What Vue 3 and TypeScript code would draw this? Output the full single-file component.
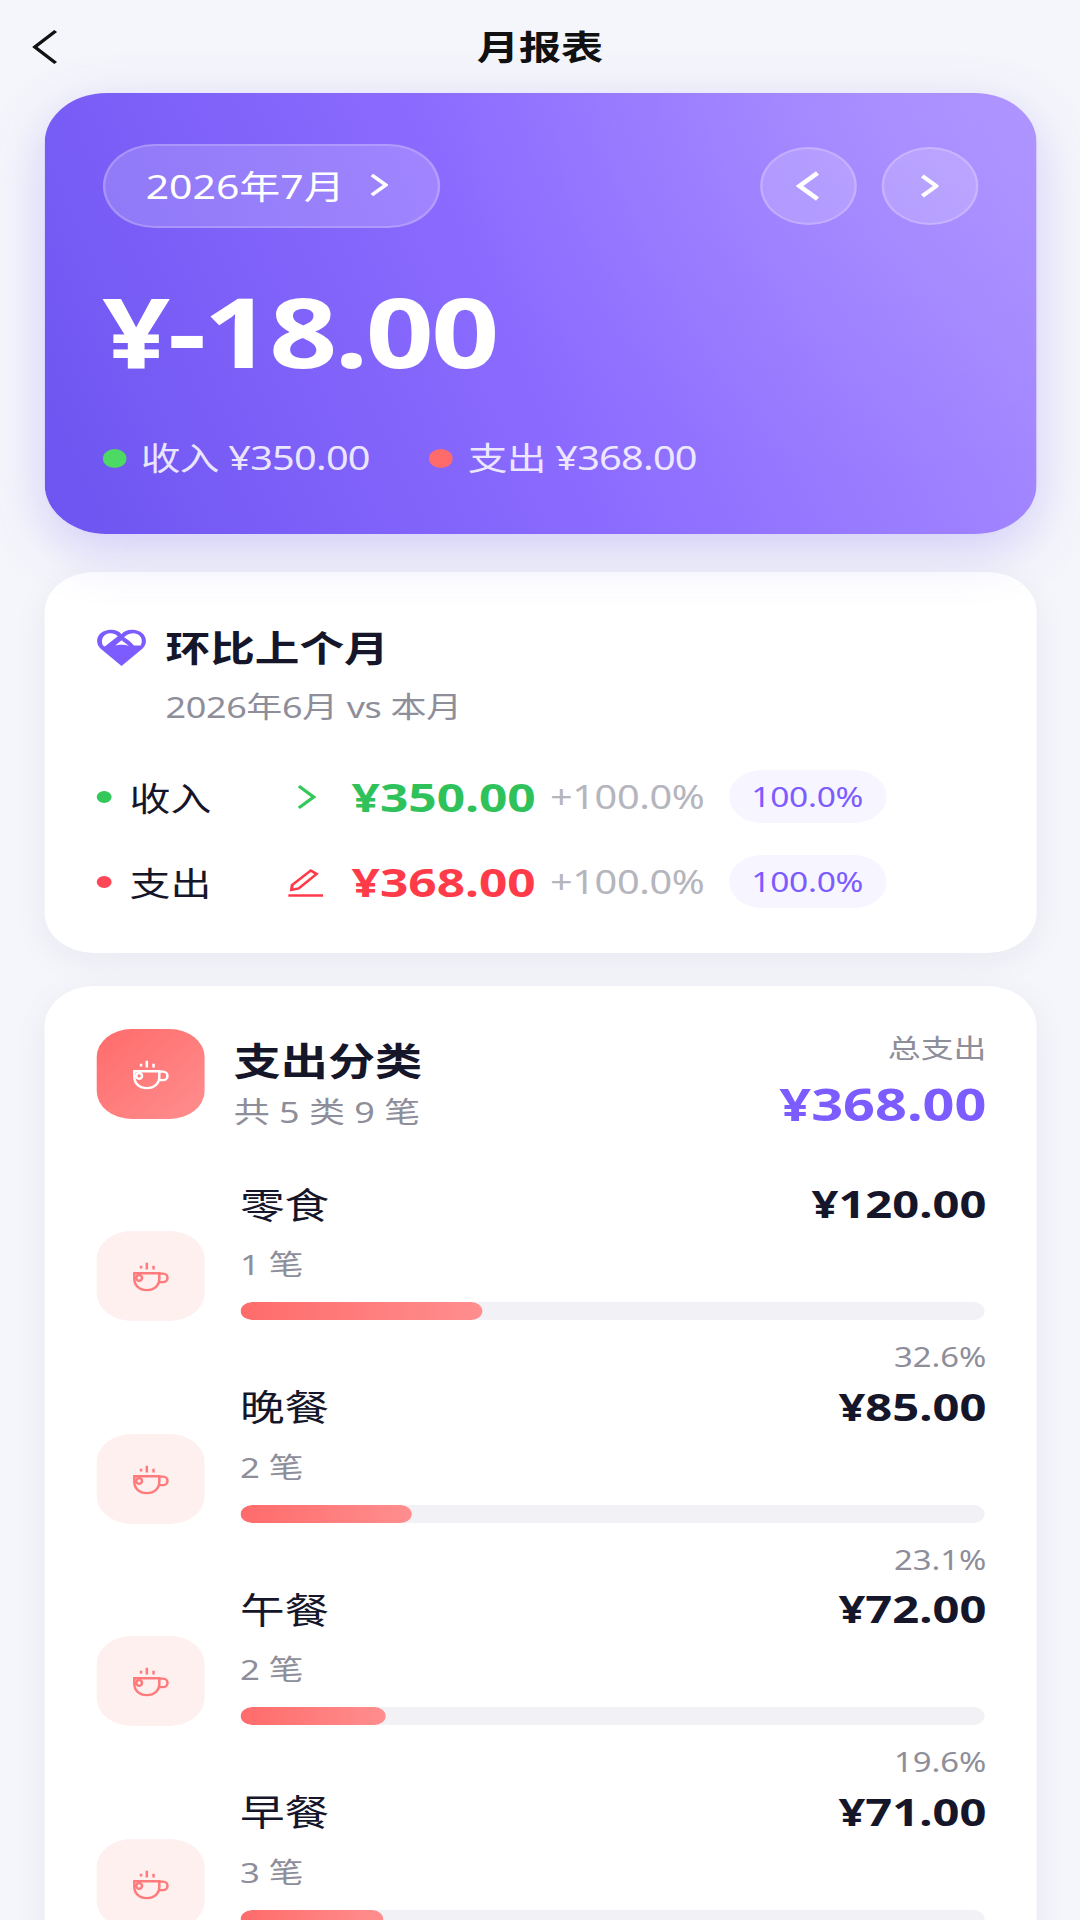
<script setup lang="ts">
interface CompareRow {
  label: string
  amount: string
  kind: 'income' | 'expense'
}

interface Category {
  name: string
  count: number
  amount: string
  percent: number
}

const compareRows: CompareRow[] = [
  { label: '收入', amount: '¥350.00', kind: 'income' },
  { label: '支出', amount: '¥368.00', kind: 'expense' }
]

const categories: Category[] = [
  { name: '零食', count: 1, amount: '¥120.00', percent: 32.6 },
  { name: '晚餐', count: 2, amount: '¥85.00', percent: 23.1 },
  { name: '午餐', count: 2, amount: '¥72.00', percent: 19.6 },
  { name: '早餐', count: 3, amount: '¥71.00', percent: 19.3 }
]
</script>

<template>
  <div class="page">
    <header class="top-bar">
      <svg class="back" viewBox="0 0 20 36" fill="none" preserveAspectRatio="none">
        <path d="M18 2 2 18l16 16" />
      </svg>
      <h1 class="top-title">月报表</h1>
    </header>

    <section class="hero">
      <div class="hero-top">
        <div class="month-pill">
          <span>2026年7月</span>
          <svg class="pill-arrow" viewBox="0 0 16 24" fill="none" preserveAspectRatio="none"><path d="M2 2l12 10L2 22" /></svg>
        </div>
        <div class="nav">
          <div class="nav-btn">
            <svg class="nav-prev" viewBox="0 0 22 32" fill="none" preserveAspectRatio="none"><path d="M19 3 3 16l16 13" /></svg>
          </div>
          <div class="nav-btn">
            <svg class="nav-next" viewBox="0 0 16 24" fill="none" preserveAspectRatio="none"><path d="M2 2l12 10L2 22" /></svg>
          </div>
        </div>
      </div>
      <div class="hero-amount">¥-18.00</div>
      <div class="hero-stats">
        <div class="stat"><i class="stat-dot green"></i>收入 ¥350.00</div>
        <div class="stat"><i class="stat-dot red"></i>支出 ¥368.00</div>
      </div>
    </section>

    <section class="card compare">
      <div class="compare-head">
        <svg class="heart" viewBox="0 0 40 38" preserveAspectRatio="none">
          <path class="heart-body" d="M20 37 3 20C-2 14 0 4 9 2c5-1 9 1 11 4 2-3 6-5 11-4 9 2 11 12 6 18z" />
          <path class="heart-cut" d="M5 17C2.500 11 6 5 11 5c2.500 0 4.500 1 6 3L6.500 18z" />
          <path class="heart-cut" d="M22 9c2-3 5-4 8-4 5 .5 8 6 5.500 12H30c-2-3-5-6-8-8z" />
          <path class="heart-cut" d="M15 17l5-5 6 5.500c-3-1.500-8-1.500-11-.5z" />
        </svg>
        <div>
          <div class="compare-title">环比上个月</div>
          <div class="compare-sub">2026年6月 vs 本月</div>
        </div>
      </div>
      <div v-for="row in compareRows" :key="row.label" class="compare-row" :class="row.kind">
        <i class="row-dot"></i>
        <span class="row-label">{{ row.label }}</span>
        <span class="row-icon">
          <svg v-if="row.kind === 'income'" class="row-arrow" viewBox="0 0 16 24" fill="none" preserveAspectRatio="none">
            <path d="M2 2l12 10L2 22" />
          </svg>
          <svg v-else class="row-pen" viewBox="0 0 28 30" fill="none" preserveAspectRatio="none">
            <path d="M3.500 18 18 3.500l4.500 3.500L8.500 21.500 3 23z" />
            <path d="M.5 28.500h27" />
          </svg>
        </span>
        <span class="row-amount">{{ row.amount }}</span>
        <span class="row-change">+100.0%</span>
        <span class="row-tag">100.0%</span>
      </div>
    </section>

    <section class="card breakdown">
      <div class="breakdown-head">
        <div class="cat-icon solid">
          <svg class="cup" viewBox="0 0 40 34" fill="none" preserveAspectRatio="none">
            <path d="M3 14h26v6c0 7-5 12-13 12S3 27 3 20z" />
            <path d="M29 14.500h4a4.500 4.500 0 0 1 0 9h-5" />
            <circle cx="8" cy="19" r="3" />
            <path d="M10 9V6M16 10V3M23 10V6" />
          </svg>
        </div>
        <div class="head-text">
          <div class="head-title">支出分类</div>
          <div class="head-sub">共 5 类 9 笔</div>
        </div>
        <div class="head-total">
          <div class="total-label">总支出</div>
          <div class="total-value">¥368.00</div>
        </div>
      </div>

      <div v-for="cat in categories" :key="cat.name" class="cat-item">
        <div class="cat-icon">
          <svg class="cup" viewBox="0 0 40 34" fill="none" preserveAspectRatio="none">
            <path d="M3 14h26v6c0 7-5 12-13 12S3 27 3 20z" />
            <path d="M29 14.500h4a4.500 4.500 0 0 1 0 9h-5" />
            <circle cx="8" cy="19" r="3" />
            <path d="M10 9V6M16 10V3M23 10V6" />
          </svg>
        </div>
        <div class="cat-body">
          <div class="cat-line">
            <span class="cat-name">{{ cat.name }}</span>
            <span class="cat-amount">{{ cat.amount }}</span>
          </div>
          <div class="cat-count">{{ cat.count }} 笔</div>
          <div class="bar">
            <div class="bar-fill" :style="{ width: cat.percent + '%' }"></div>
          </div>
          <div class="cat-percent">{{ cat.percent }}%</div>
        </div>
      </div>
    </section>
  </div>
</template>

<style>
html,
body {
  margin: 0;
  background: #f5f6fb;
  overflow: hidden;
}
</style>

<style scoped>
/* the whole page is drawn 1.24x wide, so widths below are in unstretched px */
.page {
  width: 871px;
  height: 1920px;
  overflow: hidden;
  transform: scaleX(1.24);
  transform-origin: left top;
  background: #f5f6fb;
  font-family: "Noto Sans", "Noto Sans CJK SC", sans-serif;
  color: #16162a;
}

.top-bar {
  height: 93px;
  display: flex;
  align-items: center;
  justify-content: center;
  position: relative;
  padding-bottom: 3px;
  box-sizing: border-box;
}

.back {
  position: absolute;
  left: 26px;
  top: 29px;
  width: 21px;
  height: 36px;
  stroke: #111;
  stroke-width: 3;
}

.top-title {
  margin: 0;
  font-size: 34px;
  font-weight: 700;
  color: #111;
}

.hero {
  position: relative;
  z-index: 1;
  margin: 0 35.5px;
  height: 441px;
  box-sizing: border-box;
  padding: 51px 47px 0;
  border-radius: 50px;
  background:
    radial-gradient(circle at 85% 8%, rgba(255, 255, 255, 0.07), rgba(255, 255, 255, 0) 45%),
    linear-gradient(70deg, #6d54f0 0%, #8b6bff 47%, #ab90ff 100%);
  box-shadow: 0 16px 48px rgba(110, 85, 240, 0.26);
  color: #fff;
}

.hero-top {
  display: flex;
  justify-content: space-between;
  align-items: center;
}

.month-pill {
  width: 272px;
  height: 84px;
  box-sizing: border-box;
  padding: 0 0 3px 33px;
  display: flex;
  align-items: center;
  gap: 20px;
  border: 2px solid rgba(255, 255, 255, 0.2);
  border-radius: 42px;
  background: rgba(255, 255, 255, 0.18);
  font-size: 33px;
}

.pill-arrow {
  width: 15px;
  height: 24px;
  stroke: #fff;
  stroke-width: 3.400;
}

.nav {
  display: flex;
  gap: 20px;
}

.nav-btn {
  width: 78px;
  height: 78px;
  box-sizing: border-box;
  display: flex;
  align-items: center;
  justify-content: center;
  border: 2px solid rgba(255, 255, 255, 0.2);
  border-radius: 50%;
  background: rgba(255, 255, 255, 0.18);
}

.nav-prev {
  width: 20px;
  height: 32px;
  stroke: #fff;
  stroke-width: 4.200;
}

.nav-next {
  width: 15px;
  height: 24px;
  stroke: #fff;
  stroke-width: 3.800;
}

.hero-amount {
  margin-top: 43px;
  font-size: 96px;
  letter-spacing: -2px;
  line-height: 120px;
  font-weight: 700;
}

.hero-stats {
  margin-top: 47px;
  display: flex;
  gap: 48px;
  font-size: 32px;
  letter-spacing: -0.6px;
  line-height: 40px;
  color: rgba(255, 255, 255, 0.86);
}

.stat {
  display: flex;
  align-items: center;
  gap: 12px;
}

.stat-dot {
  width: 19px;
  height: 19px;
  border-radius: 50%;
}

.stat-dot.green {
  background: #4cd964;
}

.stat-dot.red {
  background: #ff6b6b;
}

.card {
  background: #fff;
  border-radius: 40px;
  margin: 0 35.5px;
  box-shadow: 0 8px 32px rgba(30, 30, 80, 0.06);
}

.compare {
  margin-top: 38px;
  height: 381px;
  box-sizing: border-box;
  padding: 52px 43px 0 42px;
}

.compare-head {
  display: flex;
  gap: 16px;
  margin-bottom: 44px;
}

.heart {
  width: 40px;
  height: 39px;
  margin-top: 4px;
}

.heart-body {
  fill: #7c5cff;
}

.heart-cut {
  fill: #fff;
}

.compare-title {
  font-size: 36px;
  line-height: 50px;
  font-weight: 700;
}

.compare-sub {
  margin-top: 14px;
  font-size: 29px;
  letter-spacing: -0.3px;
  line-height: 38px;
  color: #8e8e9a;
}

.compare-row {
  display: flex;
  align-items: center;
  height: 53px;
  margin-bottom: 32px;
}

.row-dot {
  width: 12px;
  height: 12px;
  border-radius: 50%;
  margin-right: 15px;
}

.row-label {
  width: 118px;
  font-size: 33px;
}

.row-icon {
  width: 48px;
  display: flex;
  justify-content: center;
  margin-right: 13px;
}

.row-arrow {
  width: 16px;
  height: 26px;
  stroke: #34c759;
  stroke-width: 2.800;
}

.row-pen {
  width: 29px;
  height: 30px;
  stroke: #ff3b4a;
  stroke-width: 2.400;
}

.row-amount {
  width: 160px;
  font-size: 40px;
  font-weight: 700;
}

.income .row-dot {
  background: #34c759;
}

.income .row-amount {
  color: #2fc25b;
}

.expense .row-dot {
  background: #ff4757;
}

.expense .row-amount {
  color: #ff3b4a;
}

.row-change {
  width: 144px;
  font-size: 32px;
  letter-spacing: -0.3px;
  color: #b5b5be;
}

.row-tag {
  width: 127px;
  height: 53px;
  border-radius: 27px;
  background: #f7f5ff;
  color: #7c5cff;
  font-size: 27px;
  letter-spacing: -0.2px;
  line-height: 53px;
  text-align: center;
}

.breakdown {
  margin-top: 33px;
  padding: 43px 40px 40px 42px;
}

.breakdown-head {
  display: flex;
  align-items: center;
  gap: 24px;
  height: 90px;
  margin-bottom: 59px;
}

.cat-icon {
  height: 90px;
  width: 87px;
  flex: none;
  border-radius: 28px;
  background: #fff0f0;
  display: flex;
  align-items: center;
  justify-content: center;
}

.cat-icon.solid {
  background: linear-gradient(135deg, #ff6b6b, #ff8e8e);
}

.cup {
  width: 31px;
  height: 32px;
  stroke: #ff7b7b;
  stroke-width: 2.600;
}

.solid .cup {
  stroke: #fff;
}

.head-text {
  flex: 1;
  padding-top: 19px;
}

.head-title {
  font-size: 38px;
  line-height: 50px;
  font-weight: 700;
}

.head-sub {
  margin-top: 7px;
  font-size: 29px;
  line-height: 40px;
  color: #8e8e9a;
}

.head-total {
  text-align: right;
  padding-top: 14px;
}

.total-label {
  font-size: 26.5px;
  line-height: 36px;
  color: #8e8e9a;
}

.total-value {
  margin-top: 10px;
  font-size: 45px;
  line-height: 56px;
  font-weight: 700;
  color: #7c5cff;
}

.cat-item {
  display: flex;
  align-items: center;
  gap: 29px;
  margin-bottom: 6.500px;
}

.cat-body {
  flex: 1;
}

.cat-line {
  display: flex;
  justify-content: space-between;
  align-items: center;
  height: 50px;
}

.cat-name {
  font-size: 36px;
}

.cat-amount {
  font-size: 38px;
  font-weight: 700;
}

.cat-count {
  margin-top: 17px;
  font-size: 28px;
  line-height: 38px;
  color: #8e8e9a;
}

.bar {
  margin: 19px 2px 0 0;
  height: 18px;
  border-radius: 9px;
  background: #f1f1f6;
  overflow: hidden;
}

.bar-fill {
  height: 100%;
  border-radius: 9px;
  background: linear-gradient(90deg, #ff6b6b, #ff8e8e);
}

.cat-percent {
  margin-top: 20px;
  font-size: 26.5px;
  line-height: 34px;
  color: #8e8e9a;
  text-align: right;
}
</style>
